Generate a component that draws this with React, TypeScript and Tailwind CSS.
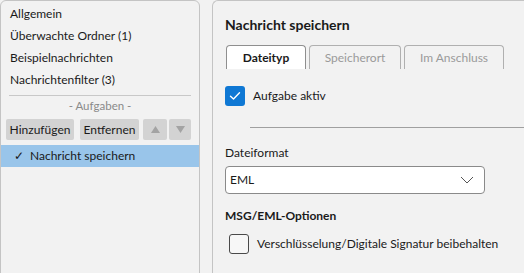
import React from 'react';

const navItems = ['Allgemein', 'Überwachte Ordner (1)', 'Beispielnachrichten', 'Nachrichtenfilter (3)'];

const font = { fontFamily: 'Lato, "Noto Sans", sans-serif' };

const Arrow = ({ up }: { up?: boolean }) => (
  <svg width="11" height="9" viewBox="0 0 11 9">
    <path d={up ? 'M5.5 1 L10 8 L1 8 Z' : 'M1 1 L10 1 L5.5 8 Z'} fill="#a3a3a3" />
  </svg>
);

export default function App() {
  return (
    <div
      className="flex w-[524px] h-[273px] overflow-hidden bg-[#f2f2f2] text-[12px] text-[#1a1a1a]"
      style={font}
    >
      {/* left: settings list */}
      <div className="w-[200px] shrink-0 h-[290px] border border-[#c4c4c4] rounded-t-[6px] flex flex-col pt-[2px]">
        {navItems.map((item) => (
          <div key={item} className="h-[22px] flex items-center pl-[9px]">
            {item}
          </div>
        ))}
        <div className="mx-[8px] mt-[4px] border-t border-[#c8c8c8]" />
        <div className="text-center text-[#8a8a8a] text-[11.5px] mt-[1px] h-[18px] leading-[18px]">- Aufgaben -</div>
        <div className="flex items-center px-[5px] mt-[4px]">
          <button className="h-[21px] w-[68px] rounded-[2px] bg-[#d3d3d3] text-[#1a1a1a]">Hinzufügen</button>
          <button className="ml-[6px] h-[21px] w-[59px] rounded-[2px] bg-[#d3d3d3] text-[#1a1a1a]">Entfernen</button>
          <button className="ml-[4px] h-[21px] w-[24px] rounded-[2px] bg-[#d3d3d3] flex items-center justify-center">
            <Arrow up />
          </button>
          <button className="ml-[2px] h-[21px] w-[22px] rounded-[2px] bg-[#d3d3d3] flex items-center justify-center">
            <Arrow />
          </button>
        </div>
        <div className="mt-[5px] h-[22px] bg-[#99c5ea] flex items-center pl-[13px]">
          <span className="mr-[6px]">✓</span>Nachricht speichern
        </div>
      </div>

      {/* right: task editor */}
      <div className="ml-[12px] w-[340px] shrink-0 h-[290px] border-l border-t border-[#c4c4c4] rounded-tl-[6px] pl-[12px] pt-[13px]">
        <div className="text-[14px] font-bold h-[22px] leading-[22px]">Nachricht speichern</div>
        <div className="flex gap-[3px] mt-[9px] ml-[1px] h-[24px]">
          <div className="w-[80px] h-[24px] border border-b-0 border-[#8f8f8f] rounded-t-[4px] bg-white flex items-center justify-center font-bold">Dateityp</div>
          <div className="w-[92px] h-[24px] border border-b-0 border-[#b0b0b0] rounded-t-[4px] flex items-center justify-center text-[#9a9a9a]">Speicherort</div>
          <div className="w-[100px] h-[24px] border border-b-0 border-[#b0b0b0] rounded-t-[4px] flex items-center justify-center text-[#9a9a9a]">Im Anschluss</div>
        </div>

        <div className="flex items-center mt-[17px] h-[20px]">
          <div className="w-[20px] h-[20px] rounded-[3px] bg-[#0f78d4] flex items-center justify-center">
            <svg width="12" height="10" viewBox="0 0 12 10" fill="none">
              <path d="M1.5 5.2 L4.5 8 L10.5 1.8" stroke="white" strokeWidth="1.4" strokeLinecap="round" strokeLinejoin="round" />
            </svg>
          </div>
          <span className="ml-[8px]">Aufgabe aktiv</span>
        </div>

        <div className="ml-[25px] mt-[21px] border-t border-[#a0a0a0]" />

        <div className="mt-[16px] h-[18px] leading-[18px]">Dateiformat</div>
        <div className="mt-[4px] w-[260px] h-[28px] bg-white border border-[#8a8a8a] rounded-[4px] flex items-center justify-between pl-[4px] pr-[10px]">
          <span>EML</span>
          <svg width="14" height="8" viewBox="0 0 14 8" fill="none">
            <path d="M1 1 L7 7 L13 1" stroke="#555" strokeWidth="1" />
          </svg>
        </div>

        <div className="mt-[12px] font-bold h-[20px] leading-[20px]">MSG/EML-Optionen</div>
        <div className="flex items-center mt-[8px] ml-[4px] h-[20px]">
          <div className="w-[20px] h-[20px] rounded-[3px] border border-[#4a4a4a] bg-[#f7f7f7]" />
          <span className="ml-[8px]">Verschlüsselung/Digitale Signatur beibehalten</span>
        </div>
      </div>
    </div>
  );
}
